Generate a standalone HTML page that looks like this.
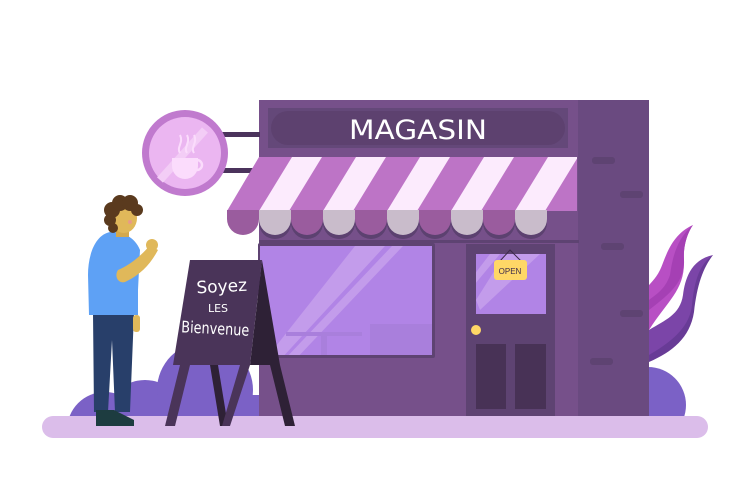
<!DOCTYPE html>
<html><head><meta charset="utf-8"><style>html,body{margin:0;padding:0;background:#fff}svg{display:block}</style></head>
<body>
<svg width="751" height="501" viewBox="0 0 751 501" xmlns="http://www.w3.org/2000/svg">
<defs><clipPath id="aw"><polygon points="259,157 577,157 577,211 227,211"/></clipPath>
<clipPath id="win"><rect x="260" y="246" width="172" height="109"/></clipPath>
<clipPath id="dw"><rect x="476" y="254" width="70" height="60"/></clipPath>
<clipPath id="gnd"><rect x="0" y="0" width="751" height="420"/></clipPath></defs>
<g fill="#7b61c6" clip-path="url(#gnd)">
<circle cx="105" cy="430" r="38"/>
<circle cx="145" cy="420" r="40"/>
<circle cx="205" cy="390" r="48"/>
<rect x="140" y="395" width="120" height="25"/>
<circle cx="648" cy="405" r="38"/>
</g>
<path d="M693,225 C670,235 665,260 660,270 C655,280 650,283 645,290 L649,330 C668,300 685,290 684,260 C683,245 688,232 693,225Z" fill="#b84fc4"/>
<path d="M693,225 C675,240 672,262 670,275 C665,290 655,295 649,300 L649,310 C672,292 684,282 684,260 C683,245 688,232 693,225Z" fill="#a540b4"/>
<path d="M713,255 C690,260 685,280 683,295 C680,315 665,320 649,330 L649,360 C668,355 690,335 692,310 C694,285 700,268 713,255Z" fill="#7b45a8"/>
<path d="M713,255 C698,265 694,285 692,305 C690,325 675,340 649,355 L649,362 C672,352 690,338 694,312 C697,285 703,268 713,255Z" fill="#683b96"/>
<rect x="42" y="416" width="666" height="22" rx="11" fill="#dbbdea"/>
<rect x="259" y="100" width="320" height="316" fill="#76508a"/>
<rect x="578" y="100" width="71" height="316" fill="#6a4a80"/>
<g fill="#5e4372">
<rect x="592" y="157" width="23" height="7" rx="3"/><rect x="620" y="191" width="23" height="7" rx="3"/>
<rect x="601" y="243" width="23" height="7" rx="3"/><rect x="620" y="310" width="23" height="7" rx="3"/>
<rect x="590" y="358" width="23" height="7" rx="3"/>
</g>
<rect x="268" y="108" width="300" height="40" fill="#644879"/>
<rect x="271" y="111" width="294" height="34" rx="17" fill="#5d416f"/>
<text x="418" y="139" text-anchor="middle" font-family="'DejaVu Sans','Liberation Sans',sans-serif" font-size="27" fill="#fff" textLength="138" lengthAdjust="spacingAndGlyphs">MAGASIN</text>
<rect x="218" y="132" width="42" height="5" fill="#4b335c"/>
<rect x="218" y="168" width="42" height="5" fill="#4b335c"/>
<circle cx="185" cy="153" r="43" fill="#c07ace"/>
<circle cx="185" cy="153" r="36" fill="#ebb6f1"/>
<path d="M160,180 L205,130" stroke="#f3cdf6" stroke-width="8"/>
<path d="M172,158 h26 v8 a13,13 0 0 1 -26,0z" fill="#fbdcfc"/>
<path d="M197,160 a5,5 0 1 1 0,10" stroke="#fbdcfc" stroke-width="2.5" fill="none"/>
<path d="M180,153 c-4,-6 4,-10 0,-18 M187,153 c-4,-6 4,-10 0,-18 M194,153 c-4,-6 4,-10 0,-18" stroke="#fbdcfc" stroke-width="2" fill="none"/>
<g fill="#5c4170">
<circle cx="275" cy="223" r="16"/><circle cx="307" cy="223" r="16"/><circle cx="339" cy="223" r="16"/><circle cx="371" cy="223" r="16"/><circle cx="403" cy="223" r="16"/><circle cx="435" cy="223" r="16"/><circle cx="467" cy="223" r="16"/><circle cx="499" cy="223" r="16"/><circle cx="531" cy="223" r="16"/>
</g>
<g clip-path="url(#aw)">
<rect x="220" y="157" width="360" height="54" fill="#bd74c6"/>
<g fill="#fcebfd">
<polygon points="292,157 322,157 289,211 259,211"/>
<polygon points="356,157 386,157 353,211 323,211"/>
<polygon points="420,157 450,157 417,211 387,211"/>
<polygon points="484,157 514,157 481,211 451,211"/>
<polygon points="548,157 578,157 545,211 515,211"/>
</g>
</g>
<g>
<path d="M227,210 h32 v9 a16,16 0 0 1 -32,0z" fill="#9a5c9e"/>
<path d="M259,210 h32 v9 a16,16 0 0 1 -32,0z" fill="#c9bccb"/>
<path d="M291,210 h32 v9 a16,16 0 0 1 -32,0z" fill="#9a5c9e"/>
<path d="M323,210 h32 v9 a16,16 0 0 1 -32,0z" fill="#c9bccb"/>
<path d="M355,210 h32 v9 a16,16 0 0 1 -32,0z" fill="#9a5c9e"/>
<path d="M387,210 h32 v9 a16,16 0 0 1 -32,0z" fill="#c9bccb"/>
<path d="M419,210 h32 v9 a16,16 0 0 1 -32,0z" fill="#9a5c9e"/>
<path d="M451,210 h32 v9 a16,16 0 0 1 -32,0z" fill="#c9bccb"/>
<path d="M483,210 h32 v9 a16,16 0 0 1 -32,0z" fill="#9a5c9e"/>
<path d="M515,210 h32 v9 a16,16 0 0 1 -32,0z" fill="#c9bccb"/>
</g>
<rect x="259" y="240" width="320" height="3" fill="#5e4372"/>
<rect x="258" y="243" width="177" height="115" rx="2" fill="#5e4372"/>
<rect x="260" y="246" width="172" height="109" fill="#b184e6"/>
<g clip-path="url(#win)">
<polygon points="355,246 385,246 280,360 265,360" fill="#c39ceb"/>
<polygon points="392,246 403,246 295,360 284,360" fill="#c39ceb"/>
<rect x="370" y="324" width="62" height="31" fill="#a97fdc"/>
<rect x="286" y="332" width="76" height="4" fill="#a97fdc"/>
<rect x="321" y="336" width="6" height="19" fill="#a97fdc"/>
</g>
<rect x="466" y="244" width="89" height="172" fill="#5e4372"/>
<rect x="476" y="254" width="70" height="60" fill="#b184e6"/>
<g clip-path="url(#dw)"><polygon points="490,254 500,254 470,290 470,280" fill="#c39ceb"/><polygon points="505,254 540,254 480,310 476,300" fill="#c39ceb"/></g>
<path d="M500,261 L510,250 L521,261" stroke="#3d2a4a" stroke-width="1" fill="none"/>
<rect x="494" y="260" width="33" height="20" rx="3" fill="#ffd766"/>
<text x="510" y="274" text-anchor="middle" font-family="'Liberation Sans',sans-serif" font-size="8" fill="#3d2a4a">OPEN</text>
<circle cx="476" cy="330" r="5" fill="#ffd766"/>
<rect x="476" y="344" width="30" height="65" fill="#483256"/>
<rect x="515" y="344" width="31" height="65" fill="#483256"/>
<polygon points="262,260 280,365 295,426 285,426 270,365 250,365" fill="#2e2136"/>
<polygon points="190,260 262,260 250,365 173,365" fill="#4a3459"/>
<polygon points="180,365 190,365 175,426 165,426" fill="#4a3459"/>
<polygon points="210,365 218,365 228,426 220,426" fill="#2e2136"/>
<polygon points="240,365 250,365 230,426 222,426" fill="#4a3459"/>
<text x="222" y="292" text-anchor="middle" font-family="'DejaVu Sans',sans-serif" font-size="17" fill="#fff" transform="rotate(-3 222 292)">Soyez</text>
<text x="218" y="312" text-anchor="middle" font-family="'DejaVu Sans',sans-serif" font-size="11" fill="#fff">LES</text>
<text x="215" y="334" text-anchor="middle" font-family="'DejaVu Sans',sans-serif" font-size="16" fill="#fff" transform="rotate(3 215 334)" textLength="68" lengthAdjust="spacingAndGlyphs">Bienvenue</text>
<path d="M93,313 L134,313 L130,412 L115,412 L112,340 L108,412 L94,412 Z" fill="#283f6a"/>
<path d="M96,410 h18 l20,10 v6 h-38z" fill="#1d3c40"/>
<rect x="133" y="315" width="7" height="17" rx="3" fill="#e0b85a"/>
<path d="M110,232 C95,235 88,255 88,275 L89,315 L138,315 L138,290 L140,250 C135,238 125,232 110,232Z" fill="#5ea1f5"/>
<path d="M118,270 C130,265 142,255 150,245 L158,250 C150,265 140,275 125,282 C118,284 114,276 118,270Z" fill="#e0b85a"/>
<circle cx="152" cy="245" r="6" fill="#e0b85a"/>
<rect x="116" y="225" width="13" height="12" fill="#d4a94e"/>
<ellipse cx="124" cy="218" rx="13" ry="15" fill="#e0b85a"/>
<g fill="#5a3a1e">
<circle cx="112" cy="210" r="8"/><circle cx="120" cy="203" r="8"/><circle cx="130" cy="203" r="8"/><circle cx="137" cy="210" r="6"/><circle cx="110" cy="220" r="6"/><circle cx="113" cy="228" r="5"/>
</g>
<circle cx="130" cy="222" r="2" fill="#e89a8a"/>
</svg>
</body></html>
